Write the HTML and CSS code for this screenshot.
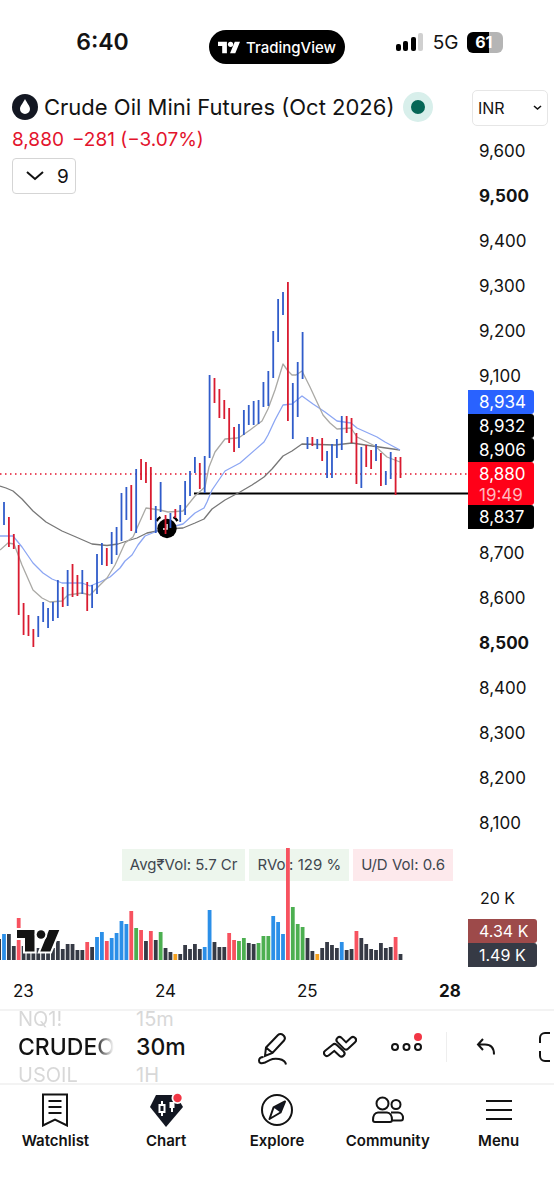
FILE: index.html
```html
<!DOCTYPE html>
<html lang="en">
<head>
    <meta charset="UTF-8">
    <meta name="viewport" content="width=device-width, initial-scale=1.0">
    <title>Crude Oil Mini Futures</title>
    <link rel="stylesheet" href="styles.css">
</head>
<body>
    <header class="status-bar">
        <time class="clock">6:40</time>
        <div class="island">
            <svg width="22" height="13" viewBox="0 0 42 22"><path d="M0 0h17v22H8V8H0zM32 0h10l-9 22H23z"/><circle cx="24" cy="5" r="5"/></svg>
            <span>TradingView</span>
        </div>
        <div class="signal">
            <svg width="28" height="18" viewBox="0 0 28 18">
                <rect x="0" y="11" width="5" height="7" rx="2"/>
                <rect x="7" y="8" width="5" height="10" rx="2"/>
                <rect x="15" y="4" width="5" height="14" rx="2"/>
                <rect x="22" y="0" width="5" height="18" rx="2" fill="#d0d0d0"/>
            </svg>
            <span>5G</span>
            <div class="battery">61</div>
        </div>
    </header>

    <main class="workspace">
        <section class="pane">
            <div class="legend">
                <div class="title-row">
                    <svg class="oil" width="26" height="26" viewBox="0 0 26 26"><circle cx="13" cy="13" r="13" fill="#131722"/><path d="M13 5c2 4 5 7 5 10a5 5 0 0 1-10 0c0-3 3-6 5-10z" fill="#fff"/></svg>
                    <h1>Crude Oil Mini Futures (Oct 2026)</h1>
                    <span class="market-open"></span>
                </div>
                <div class="quote"><span>8,880</span><span>−281 (−3.07%)</span></div>
                <button class="collapse" type="button">
                    <svg width="18" height="10" viewBox="0 0 18 10"><path d="M1 1l8 7 8-7" fill="none" stroke="#111" stroke-width="2"/></svg>
                    9
                </button>
            </div>
            <div class="plot">
                <div class="stats">
                    <span class="stat">Avg₹Vol: 5.7 Cr</span>
                    <span class="stat">RVol: 129 %</span>
                    <span class="stat stat-down">U/D Vol: 0.6</span>
                </div>
                <svg class="chart" viewBox="0 200 468 770">
                    <g id="volume"></g>
                    <path class="last-price" d="M0 474H468"/>
                    <path class="level" d="M194 493.500H468"/>
                    <path class="ma ma-slow" d="M0 486L6 488 13 491 22 499 33 511 46 522 62 531 76 537 92 544 107 545.500 118 544 127 541 137 538 147 533 167 529 183 528 195 523 204 519 212 509 225 500 240 492 252 485 264 477 272 469 283 456 292 451 302 444 335 445 352 443 372 446 400 450"/>
                    <path class="ma ma-mid" d="M0 536H13L22 547 33 563 43 573 52 579 62 583H82L90 586 100 582 110 577 120 568 125 561 132 555 138 545 145 536 160 530 183 524 195 513 204 508 207 502 212 490 225 471 240 463 264 442 268 435 275 420 283 405 292 404 302 396 313 404 325 412 337 421 351 423 357 428 377 437 385 442 400 450"/>
                    <path class="ma ma-fast" d="M0 550L8 543 14 544 22 565 33 590 42 598 50 602 62 601 68 595 82 593 90 595 107 578 115 565 125 543 133 537 146 508 160 510 168 512 183 511 195 496 205 487 209 467 215 452 225 439 237 438 240 437 250 430 262 421 268 409 275 390 283 364 288 371 292 375H296L302 371 310 387 323 415 330 423 337 429 351 428 357 437 375 446 387 457 400 462"/>
                    <g class="alarm">
                        <circle cx="167" cy="528.500" r="9.700"/>
                        <path class="bells" d="M156.500 521a13 13 0 0 1 4-4M173.500 517a13 13 0 0 1 4 4"/>
                        <path class="hands" d="M167 524v5h-4"/>
                    </g>
                    <g id="bars"></g>
                    <g class="watermark">
                        <path d="M17 930h17.500v21.500H25V938h-8zM49 930h10.300l-9 21.500h-10z"/>
                        <circle cx="41" cy="934.500" r="4.300"/>
                    </g>
                </svg>
            </div>
        </section>

        <aside class="price-axis">
            <select class="currency" aria-label="Currency"><option>INR</option></select>
            <ul class="ticks ticks-top">
                <li>9,600</li><li class="major">9,500</li><li>9,400</li><li>9,300</li><li>9,200</li><li>9,100</li>
            </ul>
            <div class="tags">
                <div class="tag tag-blue">8,934</div>
                <div class="tag">8,932</div>
                <div class="tag">8,906</div>
                <div class="tag tag-red">8,880<small>19:49</small></div>
                <div class="tag">8,837</div>
            </div>
            <ul class="ticks ticks-bottom">
                <li>8,700</li><li>8,600</li><li class="major">8,500</li><li>8,400</li><li>8,300</li><li>8,200</li><li>8,100</li>
            </ul>
            <div class="volume-tick">20 K</div>
            <div class="tag tag-volume tag-brown">4.34 K</div>
            <div class="tag tag-volume tag-slate">1.49 K</div>
        </aside>
    </main>

    <div class="time-axis"><span>23</span><span>24</span><span>25</span><span class="major">28</span></div>

    <div class="toolbar">
        <div class="wheel wheel-symbol">
            <button type="button">NQ1!</button>
            <button type="button" class="current">CRUDEO</button>
            <button type="button">USOIL</button>
        </div>
        <div class="wheel wheel-interval">
            <button type="button">15m</button>
            <button type="button" class="current">30m</button>
            <button type="button">1H</button>
        </div>
        <div class="tools">
            <button type="button" aria-label="Draw">
                <svg width="30" height="34" viewBox="0 0 30 34"><path d="M8 15.500L20 3a3.500 3.500 0 0 1 5 0l1 1a3.500 3.500 0 0 1 0 4.500L14.500 21 7 24zM8 15.500l6.500 5.500M5.500 25c-3 0-4.500 1.500-4.500 3.800S3 32 7 30.500c6-3 8-4.500 14-3.500 4 .7 6.500 2.500 7 5.500"/></svg>
            </button>
            <button type="button" aria-label="Indicators">
                <svg class="zigzag" width="34" height="24" viewBox="0 0 34 24">
                    <path d="M4 18l7.500-6 7 6.500M16.500 5l6.500 6.500 7-6.500"/>
                    <path class="zigzag-inner" d="M4 18l7.500-6 7 6.500M16.500 5l6.500 6.500 7-6.500"/>
                </svg>
            </button>
            <button type="button" aria-label="More">
                <svg width="32" height="28" viewBox="0 0 32 28"><circle cx="4" cy="14" r="3"/><circle cx="15.500" cy="14" r="3"/><circle cx="27" cy="14" r="3"/><circle class="badge" cx="27" cy="4" r="4"/></svg>
            </button>
            <button type="button" class="undo" aria-label="Undo">
                <svg width="20" height="18" viewBox="0 0 20 18"><path d="M7 1L2 6.500 7 12M2 6.500h7c6 0 9 4 9 10"/></svg>
            </button>
            <button type="button" class="fullscreen" aria-label="Fullscreen">
                <svg width="30" height="30" viewBox="0 0 30 30"><path d="M1 11V6a5 5 0 0 1 5-5h5M1 19v5a5 5 0 0 0 5 5h5"/></svg>
            </button>
        </div>
    </div>

    <nav class="tabs">
        <a href="#watchlist">
            <svg width="34" height="34" viewBox="0 0 34 34"><path d="M5 1.500h24v31l-12-6-12 6zM10.500 8h13M10.500 14h13M10.500 20h13"/></svg>
            Watchlist
        </a>
        <a href="#chart">
            <svg width="34" height="34" viewBox="0 0 34 34"><path class="solid" d="M7 2h20l7 12-17 20L1 14z"/><path class="candles" d="M13 8v4M13 19v4M10.500 12h5v7h-5z"/><path class="cutout" d="M20.500 9h5v6h-1.500v4h-2v-4h-1.500z"/><circle cx="28.500" cy="5" r="6" fill="#fff" stroke="none"/><circle class="badge" cx="28.500" cy="5" r="4.200"/></svg>
            Chart
        </a>
        <a href="#explore">
            <svg width="34" height="34" viewBox="0 0 34 34"><circle cx="17" cy="17" r="15"/><path d="M25 8.500l-4.500 11-11 6.500 4-11.500z" stroke-linejoin="round"/><path class="solid" d="M25 8.500l-11.500 6 7 5z"/></svg>
            Explore
        </a>
        <a href="#community">
            <svg width="34" height="34" viewBox="0 0 34 34"><circle cx="11.500" cy="10.500" r="6"/><circle cx="25" cy="11.500" r="4.500"/><path d="M7 19.500h9c3 0 5 3 5 7.500 0 1.500-1 2-2 2H4c-1 0-2-.5-2-2 0-4.500 2-7.500 5-7.500zM20 19.500h7c3 0 5 2.500 5 5.500 0 1.800-1 2.500-2 2.500h-9"/></svg>
            Community
        </a>
        <a href="#menu">
            <svg width="34" height="34" viewBox="0 0 34 34"><path d="M4 8h26M4 17h26M4 26h26"/></svg>
            Menu
        </a>
    </nav>

    <script src="chart.js"></script>
</body>
</html>
```
FILE: styles.css
```css
* {
    box-sizing: border-box;
}

body {
    margin: 0;
    background: #fff;
    color: #131313;
    font-family: Inter, "Liberation Sans", sans-serif;
    font-size: 17px;
    overflow-x: hidden;
}

button {
    padding: 0;
    border: 0;
    background: none;
    color: inherit;
    font: inherit;
    cursor: pointer;
}

/* Status bar */
.status-bar {
    display: grid;
    grid-template-columns: 1fr auto 1fr;
    align-items: center;
    height: 90px;
    padding-bottom: 6px;
}

.clock {
    justify-self: center;
    padding-right: 4px;
    font-size: 23px;
    font-weight: 600;
}

.island {
    display: flex;
    align-items: center;
    gap: 6px;
    height: 34px;
    margin-top: 10px;
    padding: 0 9px;
    border-radius: 17px;
    background: #000;
    color: #fff;
    font-size: 15px;
    font-weight: 500;
}

.island svg {
    fill: #fff;
}

.signal {
    display: flex;
    align-items: center;
    justify-content: center;
    gap: 9px;
    font-size: 19px;
}

.battery {
    width: 36px;
    height: 21px;
    padding-right: 3px;
    border-radius: 6px;
    background: linear-gradient(to right, #000 62%, #b5b5b5 62%);
    color: #fff;
    font-size: 16px;
    font-weight: 700;
    line-height: 21px;
    text-align: center;
}

/* Chart */
.workspace {
    display: grid;
    grid-template-columns: minmax(0, 1fr) 86px;
}

.legend {
    height: 110px;
    padding-left: 12px;
}

.title-row {
    display: flex;
    align-items: center;
    gap: 6px;
    height: 34px;
    white-space: nowrap;
}

.title-row h1 {
    margin: 0;
    font-size: 22px;
    font-weight: 400;
}

.market-open {
    width: 30px;
    height: 30px;
    margin-left: 3px;
    border: 8px solid #d8efeb;
    border-radius: 50%;
    background: #056656;
}

.quote {
    display: flex;
    gap: 8px;
    color: #e3132c;
    font-size: 19px;
    line-height: 32px;
}

.collapse {
    display: flex;
    align-items: center;
    gap: 13px;
    height: 36px;
    margin-top: 2px;
    padding: 0 6px 0 13px;
    border: 1px solid #d5d5d5;
    border-radius: 4px;
    font-size: 19px;
}

.plot {
    position: relative;
}

.chart {
    position: relative;
    display: block;
    width: 100%;
}

.stats {
    position: absolute;
    right: 15px;
    bottom: 89px;
    display: flex;
    gap: 4px;
}

.stat {
    padding: 0 8px;
    background: #edf6ed;
    color: #40464f;
    font-size: 15px;
    line-height: 32px;
    white-space: nowrap;
}

.stat-down {
    background: #fde9ec;
}

.last-price {
    stroke: #e3132c;
    stroke-width: 1.5;
    stroke-dasharray: 1.5 3.5;
}

.level {
    stroke: #000;
    stroke-width: 2;
}

.ma {
    fill: none;
    stroke-width: 1.3;
    stroke-linejoin: round;
}

.ma-slow {
    stroke: #777;
}

.ma-mid {
    stroke: #8ca6f3;
}

.ma-fast {
    stroke: #aaa9a5;
}

.bar-up {
    fill: #305cca;
}

.bar-down {
    fill: #d91b30;
}

.bells {
    fill: none;
    stroke: #000;
    stroke-width: 2.5;
}

.hands {
    fill: none;
    stroke: #fff;
    stroke-width: 1.5;
}

.watermark {
    stroke: #fff;
    stroke-width: 4;
    paint-order: stroke;
    fill: #131313;
}

/* Price axis */
.currency {
    display: block;
    width: 76px;
    height: 36px;
    margin-left: 4px;
    padding: 0 5px;
    border: 1px solid #e6e6e6;
    border-radius: 5px;
    appearance: none;
    background: url("data:image/svg+xml,%3Csvg xmlns='http://www.w3.org/2000/svg' width='9' height='6'%3E%3Cpath d='M1 1l3.500 3 3.500-3' fill='none' stroke='%23111' stroke-width='1.600'/%3E%3C/svg%3E") no-repeat right 5px center;
    color: inherit;
    font: inherit;
    font-size: 16px;
}

.ticks {
    display: grid;
    gap: 21px;
    margin: 0;
    padding: 0 0 0 11px;
    list-style: none;
    line-height: 24px;
}

.ticks-top {
    margin-top: 13px;
}

.ticks-bottom {
    margin-top: 12px;
}

.major {
    font-weight: 700;
}

.tags {
    margin-top: 2px;
}

.tag {
    width: 66px;
    padding-left: 11px;
    border-radius: 0 3px 3px 0;
    background: #000;
    color: #fff;
    line-height: 24px;
}

.tag small {
    display: block;
    color: #ffb8bf;
    font-size: 17px;
    line-height: 19px;
}

.tag-blue {
    background: #2962ff;
}

.tag-red {
    background: #ff0018;
}

.volume-tick {
    margin-top: 51px;
    padding-left: 12px;
    font-size: 16px;
    line-height: 24px;
}

.tag-volume {
    width: 69px;
    font-size: 16px;
}

.tag-brown {
    margin-top: 9px;
    background: #9d4a4a;
}

.tag-slate {
    background: #363a45;
}

.time-axis {
    display: grid;
    grid-template-columns: repeat(4, 142px);
    height: 38px;
    margin-top: 3px;
    padding-left: 13px;
    border-bottom: 2px solid #f3f3f3;
    line-height: 37px;
}

/* Toolbar */
.toolbar {
    display: flex;
    height: 74px;
    border-bottom: 2px solid #f3f3f3;
    overflow: hidden;
}

.wheel {
    display: grid;
    grid-template-rows: 16px 40px 16px;
    flex: none;
    color: #d8d8d8;
    font-size: 20px;
    line-height: 16px;
}

.wheel button {
    text-align: left;
}

.wheel .current {
    color: #131313;
    font-size: 23px;
    font-weight: 500;
}

.wheel-symbol {
    width: 96px;
    margin: 0 22px 0 18px;
    mask-image: linear-gradient(to right, #000 80%, transparent);
}

.wheel-interval {
    width: 103px;
}

.tools {
    display: flex;
    flex: none;
    align-items: center;
}

.tools button {
    display: grid;
    place-items: center;
    width: 67px;
    height: 30px;
}

.tools .undo {
    width: 78px;
    margin-left: 6px;
    border-left: 1px solid #eee;
}

.tools .fullscreen {
    width: 60px;
}

.tools svg,
.tabs svg {
    fill: none;
    stroke: #131313;
    stroke-width: 2;
}

.tools .zigzag {
    stroke-width: 8;
    stroke-linecap: round;
    stroke-linejoin: round;
}

.zigzag-inner {
    stroke: #fff;
    stroke-width: 4;
}

.tools .badge,
.tabs .badge {
    fill: #f23645;
    stroke: none;
}

/* Bottom tabs */
.tabs {
    display: grid;
    grid-template-columns: repeat(5, 1fr);
    padding-top: 8px;
}

.tabs a {
    display: grid;
    justify-items: center;
    gap: 4px;
    color: inherit;
    font-size: 15px;
    font-weight: 600;
    line-height: 20px;
    text-decoration: none;
}

.tabs .solid {
    fill: #131722;
    stroke: none;
}

.tabs .candles {
    stroke: #fff;
}

.tabs .cutout {
    fill: #fff;
    stroke: none;
}
```
FILE: chart.js
```js
const SVG_NS = 'http://www.w3.org/2000/svg';
const FIRST_X = 4;
const STEP = 4.895;
const VOLUME_BASE = 960;

// direction, high, low
const bars = `u502-525 d517-547 d534-549 d545-615 d603-635 d615-636 d629-647 u616-637 u602-622 u608-628
u602-621 u580-618 d587-607 u570-606 d564-597 d575-596 u570-594 d582-611 u585-608 u554-594
u543-565 d548-566 u532-564 u527-555 u493-541 u487-520 d485-531 u469-533 d459-480 d462-483
d467-520 u506-533 u482-512 d515-534 u513-528 d509-518 u505-522 u481-515 u471-496 u457-473
d463-489 u456-493 u375-458 d378-403 d389-418 d400-419 d408-443 d427-452 u424-448 u410-435
u405-425 u401-425 u400-424 u382-407 u371-406 u331-378 u299-342 u292-315 d282-421 u383-439
u362-417 u332-379 u437-449 d437-446 u439-449 d438-461 u451-478 u444-478 u439-458 u416-450
d416-433 d418-443 d433-484 u447-488 d445-467 d450-469 u444-461 d453-486 u471-485 u452-479
d457-495 d457-478`.split(/\s+/);

// colour key, height; starts one bar before the first price bar
const volumes = `k21 b26 k26 k14 r42 k14 k14 k12 k12 k12 k12 k12 k19 k11 k16 k16 k10 k10 r18 k13
b23 b28 r19 b22 b27 b39 b36 r49 g32 r30 k19 r29 k20 g28 k12 k8 o6 k6 k15 k11 k16 k11 b13 b50
k18 k13 k13 r27 r20 g19 g22 k17 k16 g17 g24 g24 b44 b38 b26 r112 g53 g36 g33 k22 k9 o6 k12
k18 k15 k12 b18 k10 k11 r29 k22 k16 k11 k10 k17 k12 k13 r23 k6`.split(/\s+/);

const volumeColors = { k: '#363a45', b: '#2b8fe8', r: '#f7525f', g: '#4caf50', o: '#f5a01d' };

function addRect(parent, x, y, width, height) {
    const rect = document.createElementNS(SVG_NS, 'rect');
    rect.setAttribute('x', x - width / 2);
    rect.setAttribute('y', y);
    rect.setAttribute('width', width);
    rect.setAttribute('height', height);
    parent.appendChild(rect);
    return rect;
}

const barGroup = document.getElementById('bars');
bars.forEach((bar, i) => {
    const [high, low] = bar.slice(1).split('-').map(Number);
    const rect = addRect(barGroup, FIRST_X + i * STEP, high, 1.8, low - high);
    rect.setAttribute('class', bar[0] === 'u' ? 'bar-up' : 'bar-down');
});

const volumeGroup = document.getElementById('volume');
volumes.forEach((volume, i) => {
    const height = Number(volume.slice(1));
    const rect = addRect(volumeGroup, FIRST_X + (i - 1) * STEP, VOLUME_BASE - height, 3.8, height);
    rect.setAttribute('fill', volumeColors[volume[0]]);
});
```
